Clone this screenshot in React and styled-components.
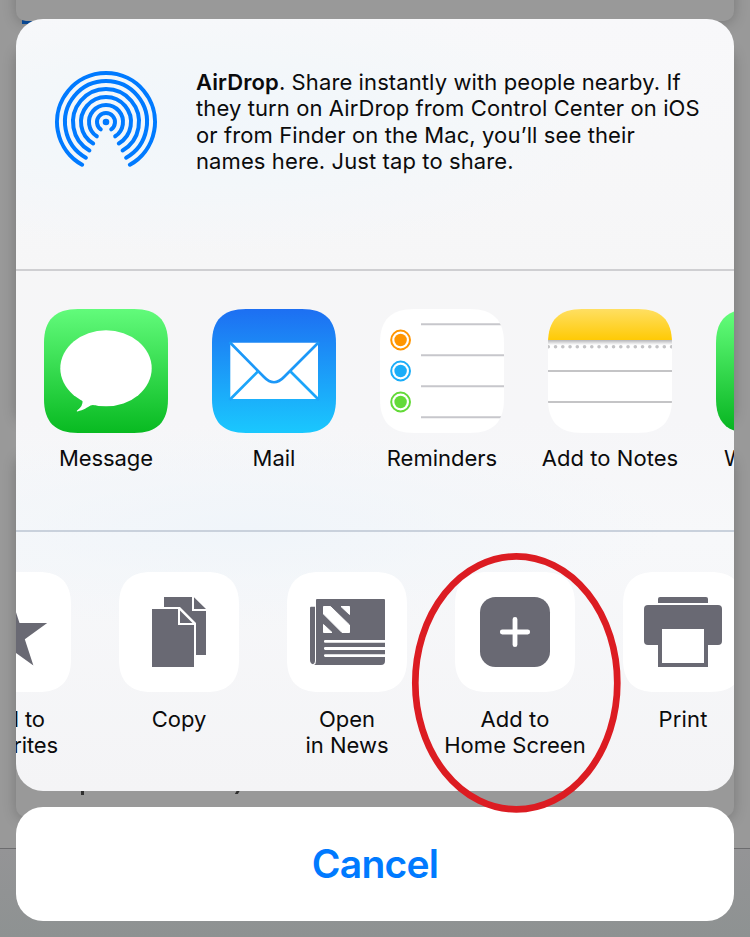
import React from "react";
import styled, { createGlobalStyle } from "styled-components";

const GlobalStyle = createGlobalStyle`
  body {
    margin: 0;
    background: #999;
    font-family: Inter, Roboto, "Liberation Sans", sans-serif;
    color: #0b0b0c;
  }
`;

const Page = styled.main`
  position: relative;
  width: 750px;
  height: 937px;
  overflow: hidden;
  background: linear-gradient(180deg, #999 0, #999 848px, #949496 849px, #8e9292 937px);
`;

const Backdrop = styled.div`
  position: absolute;
  inset: 0;
`;

const DimCard = styled.div`
  position: absolute;
  left: 16px;
  top: ${(p) => p.$top}px;
  width: 718px;
  height: ${(p) => p.$height}px;
  border-radius: 10px;
  background: #999;
  box-shadow: 0 2px 14px rgba(0, 0, 0, 0.22);
`;

const BlueSliver = styled.div`
  position: absolute;
  left: 22px;
  top: 20px;
  width: 30px;
  height: 4px;
  background: #0b4fa0;
`;

const Divider = styled.div`
  position: absolute;
  left: 0;
  top: 848px;
  width: 750px;
  height: 1px;
  background: #6c6c6e;
`;

const Stem = styled.div`
  position: absolute;
  left: ${(p) => p.$left}px;
  top: 790px;
  width: 3px;
  height: ${(p) => p.$height}px;
  background: #2f2f2f;
  transform: skewX(${(p) => p.$skew || 0}deg);
`;

const Sheet = styled.div`
  position: relative;
  display: flex;
  flex-direction: column;
  gap: 16px;
  width: 718px;
  margin: 0 auto;
  padding-top: 19px;
`;

const Panel = styled.section`
  height: 772px;
  border-radius: 27px;
  overflow: hidden;
  background:
    radial-gradient(ellipse 420px 130px at 190px 105px, #f1f6fb 0, #f3f7fa 45%, rgba(244, 247, 250, 0) 100%),
    radial-gradient(ellipse 420px 100px at 230px 510px, #f0f5fa 0, rgba(243, 247, 250, 0) 100%),
    linear-gradient(180deg, #f8f8fa 0, #f6f6f7 250px, #f6f6f8 400px, #f7f8fa 520px, #f4f4f6 100%);
`;

const AirDropRow = styled.div`
  box-sizing: border-box;
  display: flex;
  align-items: flex-start;
  height: 252px;
  padding: 51px 0 0 38px;
  border-bottom: 2px solid #cfcfd2;
`;

const AirDropText = styled.p`
  margin: -1px 0 0 38px;
  font-size: 22px;
  line-height: 26.3px;
  letter-spacing: 0.1px;
`;

const TextLine = styled.span`
  display: block;
  white-space: nowrap;
`;

const Strong = styled.b`
  font-weight: 600;
`;

const AppRow = styled.div`
  box-sizing: border-box;
  display: flex;
  height: 261px;
  padding: 38px 0 0 6px;
  border-bottom: 2px solid #c9d1dc;
`;

const ActionRow = styled.div`
  display: flex;
  padding-top: 40px;
  margin-left: -89px;
`;

const Item = styled.div`
  flex: 0 0 168px;
  display: flex;
  flex-direction: column;
  align-items: center;
`;

const Label = styled.div`
  margin-top: ${(p) => p.$gap}px;
  font-size: 22px;
  line-height: 26px;
  letter-spacing: ${(p) => p.$track || 0}px;
  text-align: center;
  white-space: pre-line;
`;

const Cancel = styled.button`
  height: 114px;
  padding: 0;
  border: 0;
  border-radius: 27px;
  background: #fff;
  color: #007aff;
  font: 600 39px/114px Inter, "Liberation Sans", sans-serif;
  letter-spacing: -0.75px;
`;

const Highlight = styled.svg`
  position: absolute;
  left: 0;
  top: 0;
  pointer-events: none;
`;

const APP_SHAPE =
  "M34 0H90C113 0 124 11 124 34V90C124 113 113 124 90 124H34C11 124 0 113 0 90V34C0 11 11 0 34 0Z";
const TILE_SHAPE =
  "M33 0H87C109.500 0 120 10.500 120 33V87C120 109.500 109.500 120 87 120H33C10.500 120 0 109.500 0 87V33C0 10.500 10.500 0 33 0Z";
const GLYPH = "#696973";

const RINGS = [
  [9, 35.5],
  [17, 32.7],
  [25, 30.8],
  [33, 30.2],
  [41, 29.4],
  [49, 29.2],
];

function AirDropIcon() {
  return (
    <svg width="104" height="104" viewBox="-52 -52 104 104">
      <circle r="3.300" fill="#007aff" />
      {RINGS.map(([r, deg]) => {
        const a = (deg * Math.PI) / 180;
        const x = r * Math.sin(a);
        const y = r * Math.cos(a);
        return (
          <path
            key={r}
            d={`M${-x} ${y}A${r} ${r} 0 1 1 ${x} ${y}`}
            fill="none"
            stroke="#007aff"
            strokeWidth="4"
            strokeLinecap="round"
          />
        );
      })}
    </svg>
  );
}

function AppIcon({ id, from, to, children }) {
  return (
    <svg width="124" height="124" viewBox="0 0 124 124">
      <defs>
        <linearGradient id={`${id}-fill`} x1="0" y1="0" x2="0" y2="1">
          <stop offset="0" stopColor={from} />
          <stop offset="1" stopColor={to} />
        </linearGradient>
        <clipPath id={`${id}-clip`}>
          <path d={APP_SHAPE} />
        </clipPath>
      </defs>
      <path d={APP_SHAPE} fill={`url(#${id}-fill)`} />
      <g clipPath={`url(#${id}-clip)`}>{children}</g>
    </svg>
  );
}

const MessageIcon = () => (
  <AppIcon id="message" from="#62fb7b" to="#08ba21">
    <ellipse cx="62" cy="59.300" rx="45.700" ry="38" fill="#fff" />
    <path d="M36 89L38.500 92Q39.300 97 32.800 101.700Q32.500 102.500 33.500 102.400C39.500 101.500 43.500 98.200 46.500 96.600Q48 95.800 50.500 96.200L60 92Z" fill="#fff" />
  </AppIcon>
);

const MailIcon = () => (
  <AppIcon id="mail" from="#1d6ff2" to="#1ac8fe">
    <rect x="18.300" y="33.700" width="87.700" height="56.300" rx="1" fill="#fff" />
    <g fill="none" stroke="#1c98f8" strokeWidth="2.700">
      <path d="M17.500 33L52 68Q62 78.500 72 68L107 33" />
      <path d="M17.500 91L46.300 62" stroke="#1ca5fa" />
      <path d="M107 91L78 62" stroke="#1ca5fa" />
    </g>
  </AppIcon>
);

const RemindersIcon = () => (
  <AppIcon id="reminders" from="#fff" to="#fff">
    <path d="M41 15.300H121M41 46.300H124M41 77.300H124M41 108.300H121" stroke="#c7c7cc" strokeWidth="2" />
    {[
      [31, "#ff9500"],
      [62, "#1badf8"],
      [93, "#63da38"],
    ].map(([y, color]) => (
      <g key={y}>
        <circle cx="20.600" cy={y} r="9.400" fill="none" stroke={color} strokeWidth="2" />
        <circle cx="20.600" cy={y} r="6.200" fill={color} />
      </g>
    ))}
  </AppIcon>
);

const NotesIcon = () => (
  <AppIcon id="notes" from="#fff" to="#fff">
    <defs>
      <linearGradient id="notes-head" x1="0" y1="0" x2="0" y2="1">
        <stop offset="0" stopColor="#ffdf62" />
        <stop offset="1" stopColor="#ffca05" />
      </linearGradient>
      <linearGradient id="notes-shade" x1="0" y1="0" x2="0" y2="1">
        <stop offset="0" stopColor="#b5b5b8" />
        <stop offset="1" stopColor="#fff" />
      </linearGradient>
    </defs>
    <rect width="124" height="31" fill="url(#notes-head)" />
    <rect y="31" width="124" height="5" fill="url(#notes-shade)" />
    <path d="M.300 37.700H125" stroke="#c4c4c6" strokeWidth="3.600" strokeLinecap="round" strokeDasharray="0 7.250" />
    <path d="M0 62H124M0 93H124" stroke="#c4c4c6" strokeWidth="2" />
  </AppIcon>
);

const WhatsAppIcon = () => <AppIcon id="whatsapp" from="#66ff7d" to="#05b31f" />;

const Tile = ({ children }) => (
  <svg width="120" height="120" viewBox="0 0 120 120">
    <path d={TILE_SHAPE} fill="#fff" />
    {children}
  </svg>
);

const StarIcon = () => (
  <Tile>
    <path
      d="M60 24.700L68.500 51H96.200L73.800 67.300L82.400 93.500L60 77.300L37.600 93.500L46.200 67.300L23.800 51H51.500Z"
      fill={GLYPH}
    />
  </Tile>
);

const CopyIcon = () => (
  <Tile>
    <path d="M45 25H73V39H87V83H45ZM75 25.200L87 37H75Z" fill={GLYPH} />
    <path d="M31 35H61L77 51V97H31Z" fill="#fff" />
    <path d="M33 37H59V53H75V95H33ZM61 38.500L73.500 51H61Z" fill={GLYPH} />
  </Tile>
);

const NewsIcon = () => (
  <Tile>
    <path d="M24 34.700H28V89Q28 91.500 26 92.300Q23 91.500 23 88V35.700Q23 34.700 24 34.700Z" fill={GLYPH} />
    <path d="M30 27H97Q98 27 98 28V89Q98 93 94 93H27Q29 92 29 89V28Q29 27 30 27Z" fill={GLYPH} />
    <g fill="#fff" stroke="#fff" strokeLinejoin="round">
      <path d="M36.500 34.500H43.500L62.500 53V60.500H55L36.500 42Z" />
      <path d="M54 34.500H62.500V42.500ZM36.500 52.500V60.500H45Z" />
    </g>
    <path
      d="M98 68H38.300A1.400 1.400 0 0 0 38.300 70.800H98ZM98 75.100H38.300A1.400 1.400 0 0 0 38.300 77.900H98ZM98 82.200H38.300A1.400 1.400 0 0 0 38.300 85H98Z"
      fill="#fff"
    />
  </Tile>
);

const HomeScreenIcon = () => (
  <Tile>
    <rect x="25" y="25" width="70" height="70" rx="15.500" fill={GLYPH} />
    <path d="M60 47.300V72.700M47.300 60H72.700" stroke="#fff" strokeWidth="4.800" strokeLinecap="round" />
  </Tile>
);

const PrintIcon = () => (
  <Tile>
    <path d="M35 31V27Q35 25 37 25H83Q85 25 85 27V31Z" fill={GLYPH} />
    <rect x="21" y="33" width="78" height="40" rx="4" fill={GLYPH} />
    <path d="M35 60H85V95H35Z" fill={GLYPH} />
    <path d="M39 57H81V91H39Z" fill="#fff" />
  </Tile>
);

const APPS = [
  ["Message", MessageIcon, -0.1],
  ["Mail", MailIcon, 0],
  ["Reminders", RemindersIcon, 0],
  ["Add to Notes", NotesIcon, 0.05],
  ["WhatsApp", WhatsAppIcon, 0],
];

const ACTIONS = [
  ["Add to\nFavorites", StarIcon, -0.1],
  ["Copy", CopyIcon, 0],
  ["Open\nin News", NewsIcon, 0],
  ["Add to\nHome Screen", HomeScreenIcon, 0.05],
  ["Print", PrintIcon, 0.2],
];

export default function App() {
  return (
    <Page>
      <GlobalStyle />
      <Backdrop>
        <DimCard $top={48} $height={372} />
        <DimCard $top={455} $height={362} />
        <BlueSliver />
        <DimCard $top={-60} $height={81} />
        <Stem $left={81} $height={5} />
        <Stem $left={236} $height={4} $skew={-30} />
        <Divider />
      </Backdrop>
      <Sheet>
        <Panel>
          <AirDropRow>
            <AirDropIcon />
            <AirDropText>
              <TextLine>
                <Strong>AirDrop</Strong>. Share instantly with people nearby. If
              </TextLine>
              <TextLine>they turn on AirDrop from Control Center on iOS</TextLine>
              <TextLine>or from Finder on the Mac, you’ll see their</TextLine>
              <TextLine>names here. Just tap to share.</TextLine>
            </AirDropText>
          </AirDropRow>
          <AppRow>
            {APPS.map(([name, Icon, track]) => (
              <Item key={name}>
                <Icon />
                <Label $gap={12} $track={track}>{name}</Label>
              </Item>
            ))}
          </AppRow>
          <ActionRow>
            {ACTIONS.map(([name, Icon, track]) => (
              <Item key={name}>
                <Icon />
                <Label $gap={14} $track={track}>{name}</Label>
              </Item>
            ))}
          </ActionRow>
        </Panel>
        <Cancel>Cancel</Cancel>
      </Sheet>
      <Highlight width="750" height="937" viewBox="0 0 750 937">
        <ellipse cx="516.300" cy="682.900" rx="101" ry="126.500" fill="none" stroke="#dc1c22" strokeWidth="6.700" />
      </Highlight>
    </Page>
  );
}
